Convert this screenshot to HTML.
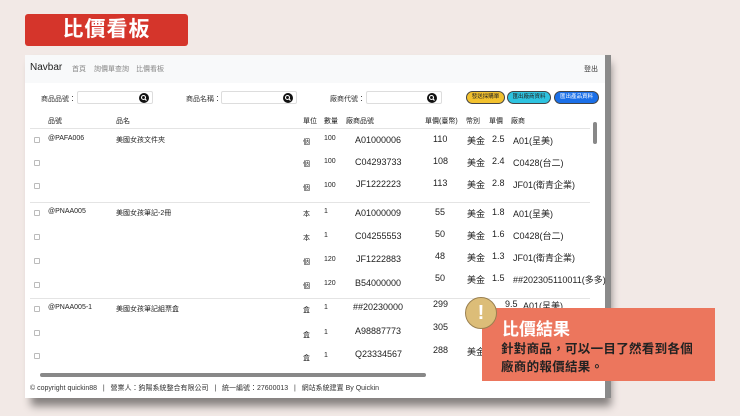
<!DOCTYPE html>
<html><head><meta charset="utf-8"><style>
*{margin:0;padding:0;box-sizing:border-box}
body{width:740px;height:416px;background:#f2e9e6;position:relative;overflow:hidden;font-family:"Liberation Sans","Noto Sans CJK TC",sans-serif;color:#222}
.a{position:absolute;white-space:nowrap}
.badge{left:25px;top:14px;width:163px;height:32px;background:#d5352b;border-radius:3px;color:#fff;font-size:21px;font-weight:bold;text-align:center;line-height:32px;letter-spacing:1px}
.panel{left:25px;top:55px;width:580px;height:343px;background:#fff;box-shadow:6px 8px 8px rgba(0,0,0,.45)}
.gbar{left:605px;top:55px;width:6px;height:343px;background:#8a8a8a}
.nav{left:25px;top:55px;width:580px;height:28px;background:#f8f9fa}
.s{font-size:7px;color:#333}
.in{height:13px;border:1px solid #ddd;background:#fff;border-radius:2px}
.mg{width:10px;height:10px}
.btn{height:13px;border-radius:7px;font-size:5.5px;text-align:center;line-height:11px;border:1px solid #444}
.cb{width:6px;height:6px;border:1px solid #bbb;border-radius:1px}
.t{font-size:7px}
.n{font-size:9px}
.hr{height:1px;background:#e4e4e4}
</style></head><body>
<div class="a badge">比價看板</div>
<div class="a panel"></div>
<div class="a gbar"></div>
<div class="a nav"></div>
<div class="a" style="left:30px;top:62px;font-size:10px">Navbar</div>
<div class="a s" style="left:72px;top:64px;color:#888">首頁</div>
<div class="a s" style="left:94px;top:64px;color:#888">詢價單查詢</div>
<div class="a s" style="left:136px;top:64px;color:#888">比價看板</div>
<div class="a s" style="left:584px;top:64px">登出</div>

<div class="a s" style="left:41px;top:94px">商品品號：</div>
<div class="a in" style="left:77px;top:91px;width:76px"></div>
<svg class="a mg" style="left:139px;top:93px" viewBox="0 0 10 10"><circle cx="5" cy="5" r="5" fill="#111"/><circle cx="4.5" cy="4.5" r="2" fill="none" stroke="#fff" stroke-width="1.1"/><path d="M6 6L7.5 7.5" stroke="#fff" stroke-width="1.2"/></svg>
<div class="a s" style="left:186px;top:94px">商品名稱：</div>
<div class="a in" style="left:221px;top:91px;width:76px"></div>
<svg class="a mg" style="left:283px;top:93px" viewBox="0 0 10 10"><circle cx="5" cy="5" r="5" fill="#111"/><circle cx="4.5" cy="4.5" r="2" fill="none" stroke="#fff" stroke-width="1.1"/><path d="M6 6L7.5 7.5" stroke="#fff" stroke-width="1.2"/></svg>
<div class="a s" style="left:330px;top:94px">廠商代號：</div>
<div class="a in" style="left:366px;top:91px;width:76px"></div>
<svg class="a mg" style="left:427px;top:93px" viewBox="0 0 10 10"><circle cx="5" cy="5" r="5" fill="#111"/><circle cx="4.5" cy="4.5" r="2" fill="none" stroke="#fff" stroke-width="1.1"/><path d="M6 6L7.5 7.5" stroke="#fff" stroke-width="1.2"/></svg>
<div class="a btn" style="left:466px;top:91px;width:39px;background:#f2c12e">發送採購單</div>
<div class="a btn" style="left:507px;top:91px;width:44px;background:#2ec3e0">匯出廠商資料</div>
<div class="a btn" style="left:554px;top:91px;width:45px;background:#1a6fe8;color:#fff">匯出產品資料</div>

<div class="a t" style="left:48px;top:116px">品號</div>
<div class="a t" style="left:116px;top:116px">品名</div>
<div class="a t" style="left:303px;top:116px">單位</div>
<div class="a t" style="left:324px;top:116px">數量</div>
<div class="a t" style="left:346px;top:116px">廠商品號</div>
<div class="a t" style="left:425px;top:116px">單價(臺幣)</div>
<div class="a t" style="left:466px;top:116px">幣別</div>
<div class="a t" style="left:489px;top:116px">單價</div>
<div class="a t" style="left:511px;top:116px">廠商</div>
<div class="a hr" style="left:30px;top:128px;width:560px"></div>

<div class="a cb" style="left:34px;top:137px"></div><div class="a t" style="left:48px;top:135px">@PAFA006</div><div class="a t" style="left:116px;top:135px">美國女孩文件夾</div>
<div class="a t" style="left:303px;top:137px">個</div><div class="a t" style="left:324px;top:135px">100</div><div class="a n" style="left:355px;top:135px">A01000006</div><div class="a n" style="left:433px;top:134px">110</div><div class="a n" style="left:467px;top:134px">美金</div><div class="a n" style="left:492px;top:134px">2.5</div><div class="a n" style="left:513px;top:134px">A01(呈美)</div>
<div class="a cb" style="left:34px;top:160px"></div><div class="a t" style="left:303px;top:159px">個</div><div class="a t" style="left:324px;top:158px">100</div><div class="a n" style="left:355px;top:157px">C04293733</div><div class="a n" style="left:433px;top:156px">108</div><div class="a n" style="left:467px;top:156px">美金</div><div class="a n" style="left:492px;top:156px">2.4</div><div class="a n" style="left:513px;top:156px">C0428(台二)</div>
<div class="a cb" style="left:34px;top:183px"></div><div class="a t" style="left:303px;top:183px">個</div><div class="a t" style="left:324px;top:182px">100</div><div class="a n" style="left:356px;top:179px">JF1222223</div><div class="a n" style="left:433px;top:178px">113</div><div class="a n" style="left:467px;top:178px">美金</div><div class="a n" style="left:492px;top:178px">2.8</div><div class="a n" style="left:513px;top:178px">JF01(衛青企業)</div>
<div class="a hr" style="left:30px;top:202px;width:560px"></div>

<div class="a cb" style="left:34px;top:210px"></div><div class="a t" style="left:48px;top:208px">@PNAA005</div><div class="a t" style="left:116px;top:208px">美國女孩筆記-2冊</div>
<div class="a t" style="left:303px;top:209px">本</div><div class="a t" style="left:324px;top:208px">1</div><div class="a n" style="left:355px;top:208px">A01000009</div><div class="a n" style="left:435px;top:207px">55</div><div class="a n" style="left:467px;top:207px">美金</div><div class="a n" style="left:492px;top:207px">1.8</div><div class="a n" style="left:513px;top:207px">A01(呈美)</div>
<div class="a cb" style="left:34px;top:234px"></div><div class="a t" style="left:303px;top:233px">本</div><div class="a t" style="left:324px;top:232px">1</div><div class="a n" style="left:355px;top:231px">C04255553</div><div class="a n" style="left:435px;top:229px">50</div><div class="a n" style="left:467px;top:229px">美金</div><div class="a n" style="left:492px;top:229px">1.6</div><div class="a n" style="left:513px;top:229px">C0428(台二)</div>
<div class="a cb" style="left:34px;top:258px"></div><div class="a t" style="left:303px;top:257px">個</div><div class="a t" style="left:324px;top:256px">120</div><div class="a n" style="left:356px;top:254px">JF1222883</div><div class="a n" style="left:435px;top:251px">48</div><div class="a n" style="left:467px;top:251px">美金</div><div class="a n" style="left:492px;top:251px">1.3</div><div class="a n" style="left:513px;top:251px">JF01(衛青企業)</div>
<div class="a cb" style="left:34px;top:282px"></div><div class="a t" style="left:303px;top:281px">個</div><div class="a t" style="left:324px;top:280px">120</div><div class="a n" style="left:355px;top:278px">B54000000</div><div class="a n" style="left:435px;top:273px">50</div><div class="a n" style="left:467px;top:273px">美金</div><div class="a n" style="left:492px;top:273px">1.5</div><div class="a n" style="left:513px;top:273px">##202305110011(多多)</div>
<div class="a hr" style="left:30px;top:298px;width:560px"></div>

<div class="a cb" style="left:34px;top:306px"></div><div class="a t" style="left:48px;top:304px">@PNAA005-1</div><div class="a t" style="left:116px;top:304px">美國女孩筆記組票盒</div>
<div class="a t" style="left:303px;top:305px">盒</div><div class="a t" style="left:324px;top:304px">1</div><div class="a n" style="left:353px;top:302px">##20230000</div><div class="a n" style="left:433px;top:299px">299</div><div class="a n" style="left:505px;top:299px">9.5</div><div class="a n" style="left:523px;top:299px">A01(呈美)</div>
<div class="a cb" style="left:34px;top:330px"></div><div class="a t" style="left:303px;top:330px">盒</div><div class="a t" style="left:324px;top:329px">1</div><div class="a n" style="left:355px;top:326px">A98887773</div><div class="a n" style="left:433px;top:322px">305</div>
<div class="a cb" style="left:34px;top:353px"></div><div class="a t" style="left:303px;top:353px">盒</div><div class="a t" style="left:324px;top:352px">1</div><div class="a n" style="left:355px;top:349px">Q23334567</div><div class="a n" style="left:433px;top:345px">288</div><div class="a n" style="left:467px;top:345px">美金</div>

<div class="a" style="left:593px;top:122px;width:4px;height:22px;background:#888;border-radius:2px"></div>
<div class="a" style="left:40px;top:373px;width:386px;height:4px;background:#888;border-radius:2px"></div>
<div class="a" style="left:30px;top:383px;font-size:7px;color:#333">© copyright quickin88 &nbsp;&nbsp;| &nbsp;&nbsp;營業人：鈞陽系統整合有限公司 &nbsp;&nbsp;| &nbsp;&nbsp;統一編號：27600013 &nbsp;&nbsp;| &nbsp;&nbsp;網站系統建置 By Quickin</div>

<div class="a" style="left:482px;top:308px;width:233px;height:73px;background:#ec765d"></div>
<div class="a" style="left:465px;top:297px;width:32px;height:32px;border-radius:50%;background:#dcbd78;border:1px solid #9a8050;color:#fff;font-size:20px;font-weight:bold;text-align:center;line-height:30px">!</div>
<div class="a" style="left:502px;top:315px;color:#fff;font-size:17px;font-weight:bold">比價結果</div>
<div class="a" style="left:501px;top:340px;color:#222;font-size:12.5px;letter-spacing:0.3px;font-weight:bold;line-height:18px">針對商品，可以一目了然看到各個<br>廠商的報價結果。</div>
</body></html>
